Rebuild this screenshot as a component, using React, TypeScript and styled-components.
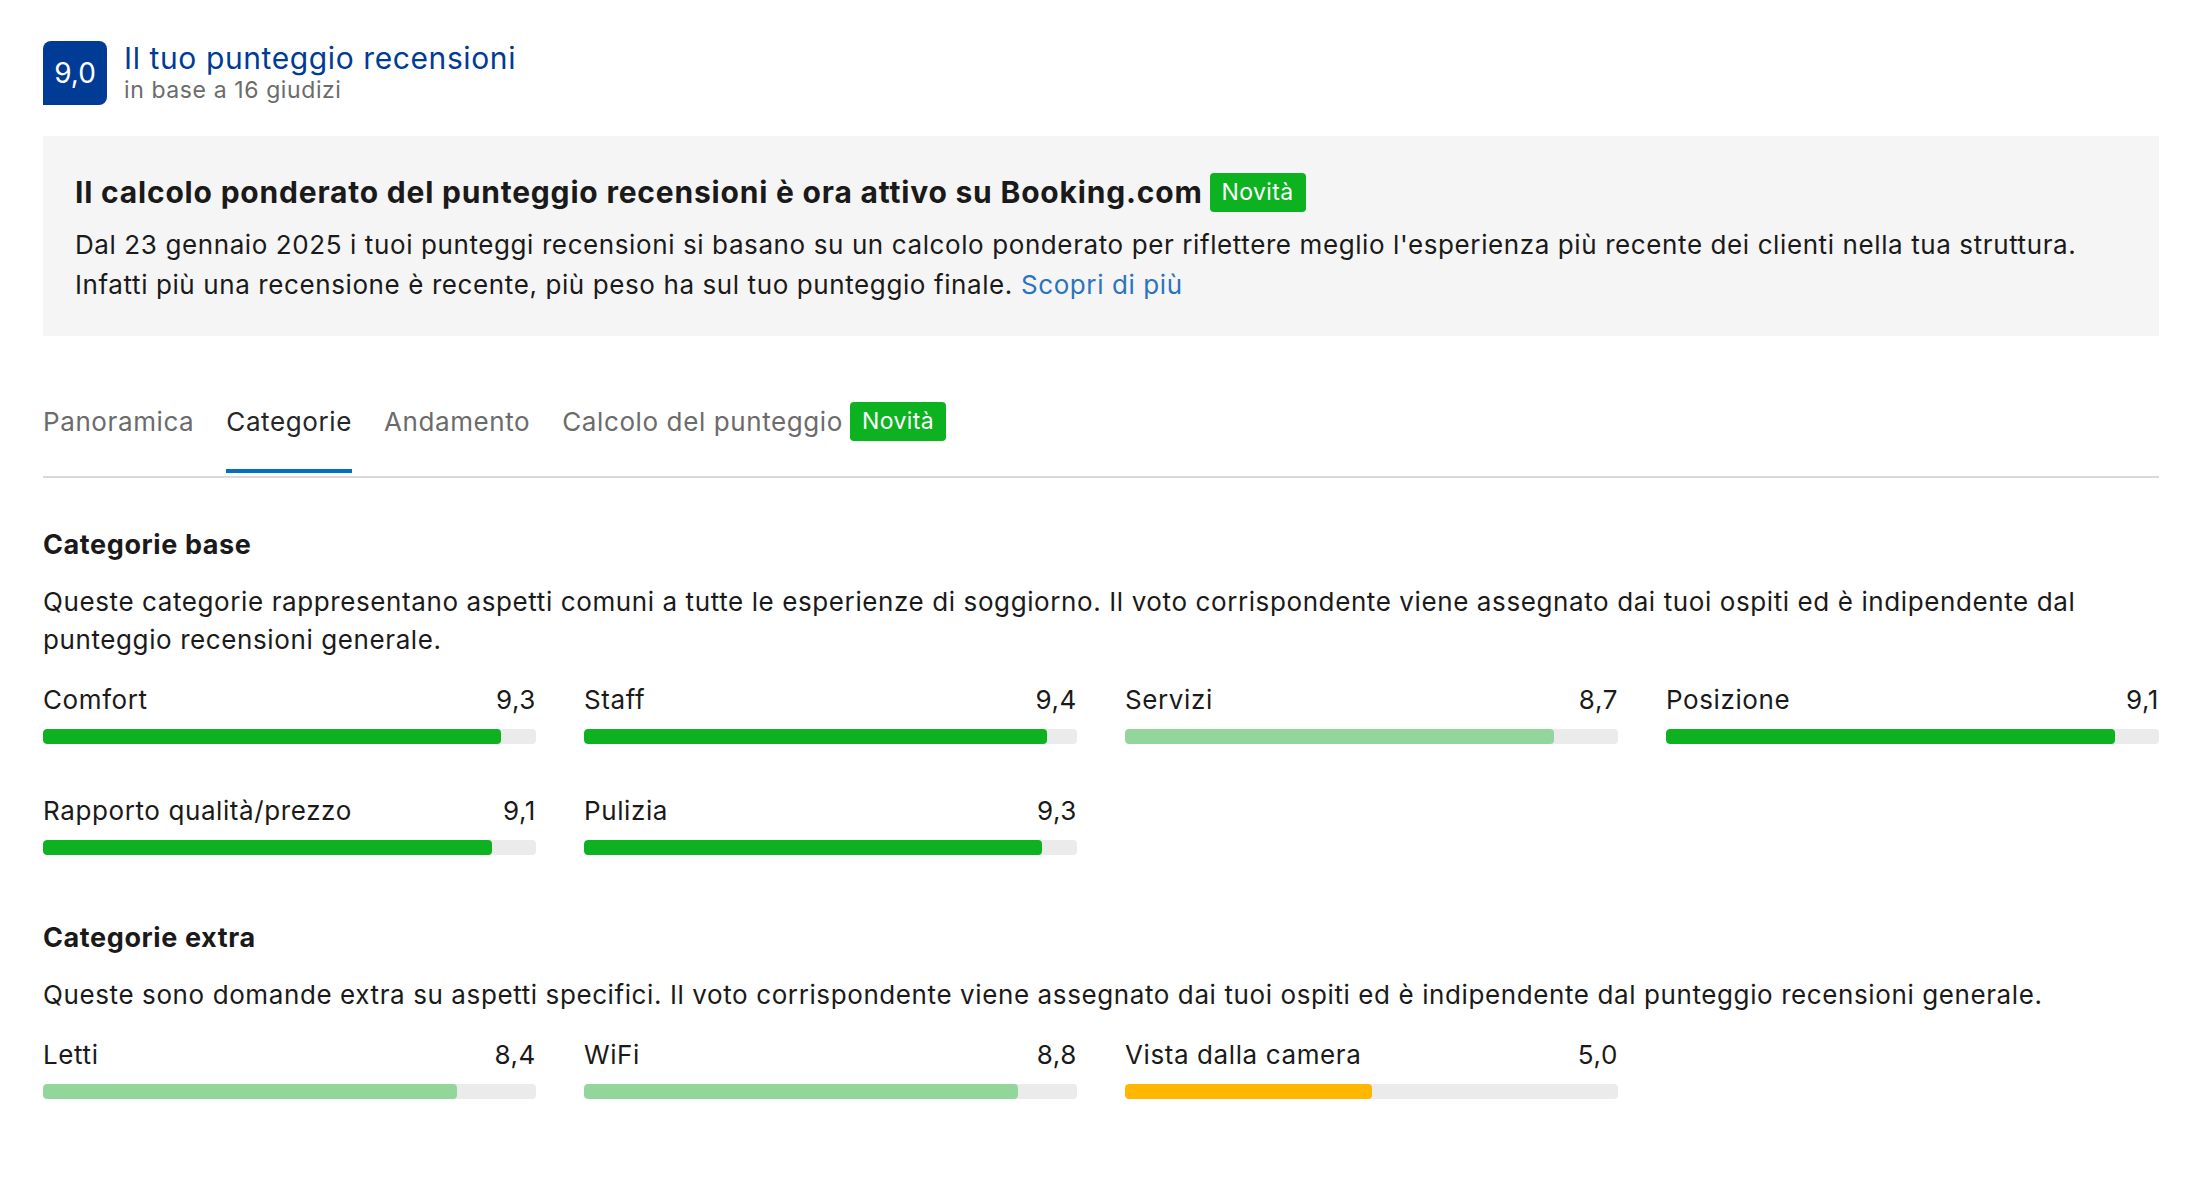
import React from 'react';
import styled, { createGlobalStyle } from 'styled-components';

const GlobalStyle = createGlobalStyle`
  html, body {
    margin: 0;
    padding: 0;
    background: #ffffff;
  }
  body {
    font-family: Inter, "Noto Sans", "Liberation Sans", sans-serif;
    color: #1a1a1a;
    letter-spacing: 0.6px;
    -webkit-font-smoothing: antialiased;
  }
`;

const Page = styled.div`
  width: 2116px;
  padding: 41px 0 60px 43px;
`;

const Header = styled.header`
  display: flex;
  align-items: center;
  gap: 17px;
`;

const ScoreBadge = styled.div`
  width: 64px;
  height: 64px;
  flex: none;
  background: #003b95;
  color: #ffffff;
  border-radius: 8px 8px 8px 0;
  display: flex;
  align-items: center;
  justify-content: center;
  font-size: 28px;
  letter-spacing: 0;
`;

const HeaderText = styled.div`
  display: flex;
  flex-direction: column;
`;

const HeaderTitle = styled.div`
  font-size: 30px;
  line-height: 34px;
  color: #003b95;
`;

const HeaderSub = styled.div`
  font-size: 23px;
  line-height: 30px;
  color: #6b6b6b;
`;

const Notice = styled.section`
  margin-top: 31px;
  background: #f5f5f5;
  padding: 37px 32px 31px;
`;

const NoticeHeading = styled.h2`
  margin: 0;
  display: flex;
  align-items: center;
  gap: 7px;
  font-size: 30px;
  line-height: 39px;
  font-weight: 700;
  letter-spacing: 0.8px;
  color: #1a1a1a;
`;

const NoticeText = styled.p`
  margin: 13px 0 0;
  font-size: 26px;
  line-height: 40px;
  color: #1a1a1a;
`;

const Link = styled.a`
  color: #2b74bf;
  text-decoration: none;
`;

const NewBadge = styled.span`
  display: inline-flex;
  align-items: center;
  height: 39px;
  padding: 0 12px;
  border-radius: 4px;
  background: #0cb21f;
  color: #ffffff;
  font-size: 23px;
  font-weight: 400;
  letter-spacing: 0.4px;
`;

const TabList = styled.nav`
  margin-top: 65px;
  display: flex;
  gap: 32px;
  padding-bottom: 3px;
  border-bottom: 2px solid #d9d9d9;
`;

const Tab = styled.div<{ $active?: boolean }>`
  display: flex;
  align-items: center;
  gap: 7px;
  height: 40px;
  padding-bottom: 28px;
  font-size: 26px;
  color: ${({ $active }) => ($active ? '#262626' : '#6b6b6b')};
  border-bottom: 4px solid ${({ $active }) => ($active ? '#0071c2' : 'transparent')};
`;

const Section = styled.section<{ $gap: number }>`
  margin-top: ${({ $gap }) => $gap}px;
`;

const SectionTitle = styled.h3`
  margin: 0;
  font-size: 27px;
  line-height: 36px;
  font-weight: 700;
  color: #1a1a1a;
`;

const SectionText = styled.p`
  margin: 20px 0 0;
  font-size: 26px;
  line-height: 38px;
  color: #1a1a1a;
`;

const ScoreGrid = styled.div`
  margin-top: 24px;
  display: grid;
  grid-template-columns: repeat(4, 1fr);
  column-gap: 48px;
  row-gap: 50px;
`;

const ScoreItem = styled.div`
  display: flex;
  flex-direction: column;
  gap: 12px;
`;

const ScoreHead = styled.div`
  display: flex;
  justify-content: space-between;
  font-size: 26px;
  line-height: 34px;
  color: #1a1a1a;
`;

const Track = styled.div`
  height: 15px;
  border-radius: 4px;
  background: #ebebeb;
  overflow: hidden;
`;

type Level = 'high' | 'good' | 'low';

const levelColor: Record<Level, string> = {
  high: '#0cb21f',
  good: '#93d69b',
  low: '#ffb700',
};

const Fill = styled.div<{ $level: Level }>`
  height: 100%;
  border-radius: 4px;
  background: ${({ $level }) => levelColor[$level]};
`;

type Score = { label: string; value: number };

const baseScores: Score[] = [
  { label: 'Comfort', value: 9.3 },
  { label: 'Staff', value: 9.4 },
  { label: 'Servizi', value: 8.7 },
  { label: 'Posizione', value: 9.1 },
  { label: 'Rapporto qualità/prezzo', value: 9.1 },
  { label: 'Pulizia', value: 9.3 },
];

const extraScores: Score[] = [
  { label: 'Letti', value: 8.4 },
  { label: 'WiFi', value: 8.8 },
  { label: 'Vista dalla camera', value: 5.0 },
];

const levelOf = (v: number): Level => (v >= 9 ? 'high' : v >= 7 ? 'good' : 'low');

const ScoreBar: React.FC<Score> = ({ label, value }) => (
  <ScoreItem>
    <ScoreHead>
      <span>{label}</span>
      <span>{value.toFixed(1).replace('.', ',')}</span>
    </ScoreHead>
    <Track>
      <Fill $level={levelOf(value)} style={{ width: `${value * 10}%` }} />
    </Track>
  </ScoreItem>
);

const tabs = ['Panoramica', 'Categorie', 'Andamento', 'Calcolo del punteggio'];

export default function App() {
  return (
    <Page>
      <GlobalStyle />
      <Header>
        <ScoreBadge>9,0</ScoreBadge>
        <HeaderText>
          <HeaderTitle>Il tuo punteggio recensioni</HeaderTitle>
          <HeaderSub>in base a 16 giudizi</HeaderSub>
        </HeaderText>
      </Header>

      <Notice>
        <NoticeHeading>
          Il calcolo ponderato del punteggio recensioni è ora attivo su Booking.com
          <NewBadge>Novità</NewBadge>
        </NoticeHeading>
        <NoticeText>
          Dal 23 gennaio 2025 i tuoi punteggi recensioni si basano su un calcolo ponderato per
          riflettere meglio l'esperienza più recente dei clienti nella tua struttura.
          <br />
          Infatti più una recensione è recente, più peso ha sul tuo punteggio finale.{' '}
          <Link href="#">Scopri di più</Link>
        </NoticeText>
      </Notice>

      <TabList>
        {tabs.map(t => (
          <Tab key={t} $active={t === 'Categorie'}>
            {t}
            {t === 'Calcolo del punteggio' && <NewBadge>Novità</NewBadge>}
          </Tab>
        ))}
      </TabList>

      <Section $gap={49}>
        <SectionTitle>Categorie base</SectionTitle>
        <SectionText>
          Queste categorie rappresentano aspetti comuni a tutte le esperienze di soggiorno. Il voto
          corrispondente viene assegnato dai tuoi ospiti ed è indipendente dal punteggio recensioni
          generale.
        </SectionText>
        <ScoreGrid>
          {baseScores.map(s => (
            <ScoreBar key={s.label} {...s} />
          ))}
        </ScoreGrid>
      </Section>

      <Section $gap={65}>
        <SectionTitle>Categorie extra</SectionTitle>
        <SectionText>
          Queste sono domande extra su aspetti specifici. Il voto corrispondente viene assegnato dai
          tuoi ospiti ed è indipendente dal punteggio recensioni generale.
        </SectionText>
        <ScoreGrid>
          {extraScores.map(s => (
            <ScoreBar key={s.label} {...s} />
          ))}
        </ScoreGrid>
      </Section>
    </Page>
  );
}
